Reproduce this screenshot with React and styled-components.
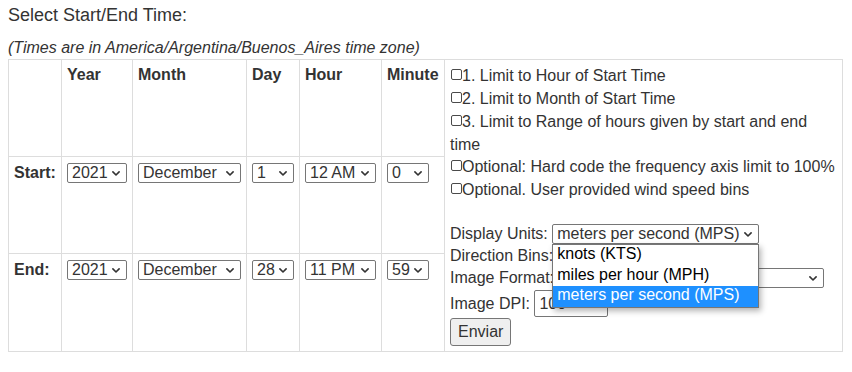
import React from "react";
import styled, { createGlobalStyle } from "styled-components";

const GlobalStyle = createGlobalStyle`
  html, body { margin: 0; padding: 0; background: #fff; }
  body {
    font-family: "Liberation Sans", Arial, Helvetica, sans-serif;
    font-size: 16px;
    color: #333;
  }
`;

const Page = styled.div`
  padding: 4px 8px 8px;
`;

const Title = styled.div`
  font-size: 18px;
  line-height: 23px;
  margin-bottom: 9px;
`;

const Note = styled.div`
  font-style: italic;
  line-height: 23px;
`;

const Grid = styled.div`
  display: grid;
  grid-template-columns: 53px 71px 114px 53px 82px 63px 398px;
  grid-template-rows: 97px 97px 98px;
  width: max-content;
  border-top: 1px solid #ddd;
  border-left: 1px solid #ddd;
`;

const Cell = styled.div`
  box-sizing: border-box;
  border-right: 1px solid #ddd;
  border-bottom: 1px solid #ddd;
  padding: 5px;
  line-height: 22.857px;
  min-width: 0;
`;

const HeadCell = styled(Cell)`
  font-weight: bold;
  line-height: 18px;
  padding-top: 6px;
`;

const RowLabel = styled(Cell)`
  font-weight: bold;
`;

const OptionsCell = styled(Cell)`
  grid-column: 7;
  grid-row: 1 / span 3;
`;

const SelectBox = styled.div`
  position: relative;
  display: flex;
  align-items: center;
  justify-content: space-between;
  box-sizing: border-box;
  width: ${(p) => p.$w}px;
  height: 20px;
  margin-top: ${(p) => (p.$inline ? 0 : 1)}px;
  padding: 0 6px 0 4px;
  border: 1px solid #767676;
  border-radius: 2px;
  background: #fff;
  color: #333;
  line-height: 18px;
  white-space: nowrap;
  flex: none;
`;

const ChevronSvg = styled.svg`
  flex: none;
  display: block;
`;

const Chevron = () => (
  <ChevronSvg width="8" height="5" viewBox="0 0 8 5">
    <polyline
      points="0.9,0.9 4,4 7.1,0.9"
      fill="none"
      stroke="#333"
      strokeWidth="1.6"
      strokeLinecap="round"
      strokeLinejoin="round"
    />
  </ChevronSvg>
);

const Select = ({ w, value, inline, children }) => (
  <SelectBox $w={w} $inline={inline}>
    <span>{value}</span>
    <Chevron />
    {children}
  </SelectBox>
);

const CheckLine = styled.div`
  white-space: ${(p) => (p.$nowrap ? "nowrap" : "normal")};
`;

const Box = styled.input.attrs({ type: "checkbox" })`
  appearance: none;
  -webkit-appearance: none;
  display: inline-block;
  box-sizing: border-box;
  width: 11px;
  height: 11px;
  margin: 0 0 0 1px;
  border: 1px solid #4a4a4a;
  border-radius: 2px;
  background: #fff;
  vertical-align: 1px;
`;

const FormBlock = styled.div`
  display: flex;
  flex-direction: column;
  padding-top: 22px;
`;

const FormRow = styled.div`
  display: flex;
  align-items: center;
  gap: 0.278em;
  margin-top: ${(p) => p.$mt || 0}px;
  line-height: 18px;
  white-space: nowrap;
`;

const Popup = styled.div`
  position: absolute;
  top: calc(100% + 1px);
  left: -1px;
  width: 207px;
  box-sizing: border-box;
  border: 1px solid #767676;
  background: #fff;
  box-shadow: 2px 3px 6px rgba(0, 0, 0, 0.3);
  z-index: 10;
  color: #000;
`;

const PopupOption = styled.div`
  height: ${(p) => p.$h}px;
  line-height: 18px;
  padding-left: 4px;
  background: ${(p) => (p.$active ? "#1e90ff" : "transparent")};
  color: ${(p) => (p.$active ? "#fff" : "#000")};
`;

const DpiInput = styled.input`
  box-sizing: border-box;
  width: 74px;
  height: 27px;
  padding: 1px 4px;
  border: 1px solid #767676;
  border-radius: 2px;
  font: inherit;
  color: #333;
  background: #fff;
  outline: none;
`;

const SubmitButton = styled.button`
  align-self: flex-start;
  box-sizing: border-box;
  height: 28px;
  padding: 0 7px;
  margin-top: 1px;
  font: inherit;
  line-height: 18px;
  color: #333;
  background: #efefef;
  border: 1px solid #767676;
  border-radius: 3px;
`;

const headers = ["", "Year", "Month", "Day", "Hour", "Minute"];
const widths = [60, 103, 42, 71, 42];
const rows = [
  { label: "Start:", values: ["2021", "December", "1", "12 AM", "0"] },
  { label: "End:", values: ["2021", "December", "28", "11 PM", "59"] },
];

export default function App() {
  return (
    <>
      <GlobalStyle />
      <Page>
        <Title>Select Start/End Time:</Title>
        <Note>(Times are in America/Argentina/Buenos_Aires time zone)</Note>
        <Grid>
          {headers.map((h, i) => (
            <HeadCell key={"h" + i}>{h}</HeadCell>
          ))}
          <OptionsCell>
            <CheckLine>
              <Box />1. Limit to Hour of Start Time
            </CheckLine>
            <CheckLine>
              <Box />2. Limit to Month of Start Time
            </CheckLine>
            <CheckLine>
              <Box />3. Limit to Range of hours given by start and end time
            </CheckLine>
            <CheckLine $nowrap>
              <Box />Optional: Hard code the frequency axis limit to 100%
            </CheckLine>
            <CheckLine $nowrap>
              <Box />Optional. User provided wind speed bins
            </CheckLine>
            <FormBlock>
              <FormRow>
                <span>Display Units:</span>
                <Select w={207} value="meters per second (MPS)" inline>
                  <Popup>
                    <PopupOption $h={21}>knots (KTS)</PopupOption>
                    <PopupOption $h={20}>miles per hour (MPH)</PopupOption>
                    <PopupOption $h={21} $active>
                      meters per second (MPS)
                    </PopupOption>
                  </Popup>
                </Select>
              </FormRow>
              <FormRow $mt={2}>
                <span>Direction Bins:</span>
                <Select w={100} value="16" inline />
              </FormRow>
              <FormRow $mt={2}>
                <span>Image Format:</span>
                <Select w={266} value="png" inline />
              </FormRow>
              <FormRow $mt={2}>
                <span>Image DPI:</span>
                <DpiInput defaultValue="100" />
              </FormRow>
              <SubmitButton>Enviar</SubmitButton>
            </FormBlock>
          </OptionsCell>
          {rows.map((r) => (
            <React.Fragment key={r.label}>
              <RowLabel>{r.label}</RowLabel>
              {r.values.map((v, i) => (
                <Cell key={i}>
                  <Select w={widths[i]} value={v} />
                </Cell>
              ))}
            </React.Fragment>
          ))}
        </Grid>
      </Page>
    </>
  );
}
